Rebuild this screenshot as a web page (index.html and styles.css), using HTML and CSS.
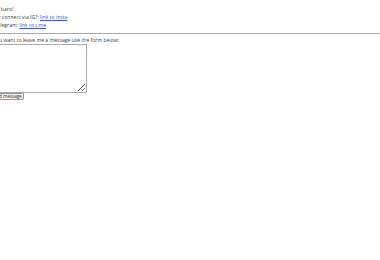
FILE: index.html
```html
<!DOCTYPE html>
<html lang="en">
<head>
  <meta charset="UTF-8">
  <meta name="viewport" content="width=device-width, initial-scale=1.0">
  <title>Contact</title>
  <link rel="stylesheet" href="styles.css">
</head>
<body>
  <div class="intro">
    <p>Hi baro!</p>
    <p>Or connect via IG?: <a href="#">link to insta</a></p>
    <p>Telegram: <a href="#">link to t.me</a></p>
  </div>
  <hr>
  <form class="contact">
    <label for="msg">If you want to leave me a message use the form below:</label>
    <textarea id="msg"></textarea>
    <button type="submit">Send message</button>
  </form>
</body>
</html>
```

FILE: styles.css
```css
body {
  font-family: 'Open Sans', sans-serif;
  font-size: 5.1px;
  line-height: 8px;
  color: #444;
  background: #fff;
  margin: 0;
}
.intro {
  margin-left: -5.5px;
  padding-top: 5px;
}
p {
  margin: 0;
}
a {
  color: #4455cc;
}
hr {
  margin: 4px 0 3px 0;
  border: none;
  border-top: 1px solid #aaa;
}
.contact {
  margin-left: -11px;
}
.contact label {
  display: block;
  line-height: 7px;
}
.contact textarea {
  display: block;
  width: 96px;
  height: 47px;
  margin: 0;
  padding: 0;
  border: 1px solid #aaa;
  resize: vertical;
}
.contact button {
  display: block;
  font-family: inherit;
  font-size: 4.6px;
  line-height: 5px;
  padding: 0 1px;
  border: 1px solid #999;
  border-radius: 1px;
  background: #f2f2f2;
  color: #333;
}
```
